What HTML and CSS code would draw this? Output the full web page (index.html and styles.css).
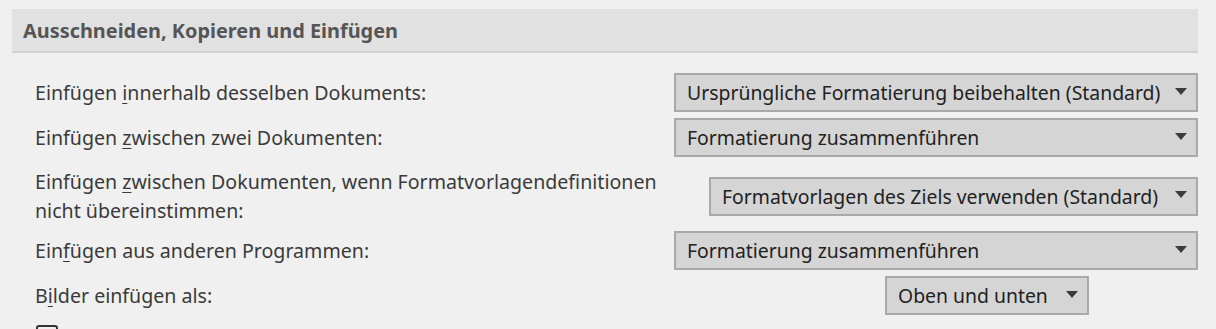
FILE: index.html
```html
<!DOCTYPE html>
<html lang="de">
<head>
<meta charset="utf-8">
<title>Ausschneiden, Kopieren und Einfügen</title>
<link rel="stylesheet" href="styles.css">
</head>
<body>
<div class="panel">
  <div class="section-head">Ausschneiden, Kopieren und Einfügen</div>
  <div class="rows">
    <div class="row">
      <div class="label">Einfügen <u>i</u>nnerhalb desselben Dokuments:</div>
      <div class="select w-wide"><span class="value">Ursprüngliche Formatierung beibehalten (Standard)</span><span class="arrow"></span></div>
    </div>
    <div class="row">
      <div class="label">Einfügen <u>z</u>wischen zwei Dokumenten:</div>
      <div class="select w-wide"><span class="value">Formatierung zusammenführen</span><span class="arrow"></span></div>
    </div>
    <div class="row row-tall">
      <div class="label">Einfügen <u>z</u>wischen Dokumenten, wenn Formatvorlagendefinitionen<br>nicht übereinstimmen:</div>
      <div class="select w-mid"><span class="value">Formatvorlagen des Ziels verwenden (Standard)</span><span class="arrow"></span></div>
    </div>
    <div class="row">
      <div class="label">Ein<u>f</u>ügen aus anderen Programmen:</div>
      <div class="select w-wide"><span class="value">Formatierung zusammenführen</span><span class="arrow"></span></div>
    </div>
    <div class="row">
      <div class="label">B<u>i</u>lder einfügen als:</div>
      <div class="select w-small"><span class="value">Oben und unten</span><span class="arrow"></span></div>
    </div>
    <div class="row row-check">
      <span class="checkbox"></span>
    </div>
  </div>
</div>
</body>
</html>
```

FILE: styles.css
```css
html, body {
  margin: 0;
  padding: 0;
  background: #f0f0f0;
  overflow: hidden;
}

body {
  font-family: "Noto Sans", "Open Sans", sans-serif;
  color: #3a3a3a;
}

.panel {
  padding: 9px 18px 0 12px;
}

.section-head {
  background: #e1e1e1;
  border-bottom: 2px solid #d2d2d2;
  height: 42px;
  line-height: 43px;
  padding-left: 11px;
  font-size: 19.9px;
  font-weight: 700;
  color: #555555;
}

.rows {
  padding: 20px 0 0 23px;
  display: flex;
  flex-direction: column;
  gap: 6px;
}

.row {
  display: flex;
  align-items: center;
  justify-content: space-between;
  min-height: 39px;
}

.row-tall {
  margin-top: 4px;
}

.label {
  font-size: 19.6px;
  line-height: 29px;
  color: #3a3a3a;
}

.label u {
  text-underline-offset: 3px;
  text-decoration-thickness: 1px;
}

.select {
  box-sizing: border-box;
  height: 39px;
  background: #d5d5d5;
  border: 2px solid #a9a9a9;
  display: flex;
  align-items: center;
  justify-content: space-between;
  padding: 0 9px 0 11px;
  font-size: 19.4px;
  color: #222222;
}

.w-wide { width: 524px; }
.w-mid { width: 489px; }
.w-small { width: 204px; margin-right: 109px; }

.arrow {
  width: 0;
  height: 0;
  border-left: 6px solid transparent;
  border-right: 6px solid transparent;
  border-top: 7px solid #3c3c3c;
  margin-top: -3px;
}

.row-check {
  min-height: 0;
  margin-top: 4px;
}

.checkbox {
  display: block;
  width: 18px;
  height: 18px;
  border: 2px solid #333333;
  border-radius: 3px;
  margin-left: 1px;
}
```
